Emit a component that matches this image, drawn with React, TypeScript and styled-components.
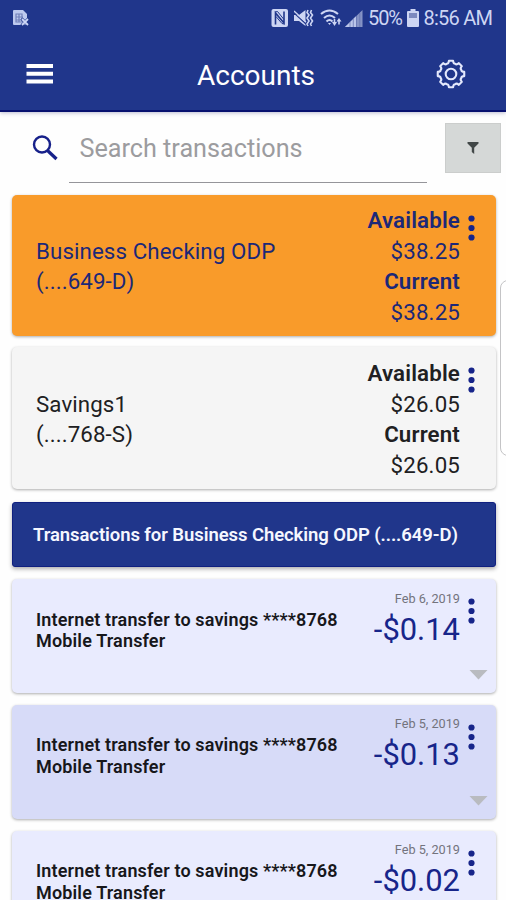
import React from 'react';
import styled, { createGlobalStyle } from 'styled-components';

const navy = '#20368b';
const ink = '#1c2878';

const GlobalStyle = createGlobalStyle`
  * { box-sizing: border-box; }
  html, body { margin: 0; padding: 0; background: #fefefe; }
  body { font-family: Roboto, "Liberation Sans", sans-serif; overflow: hidden; }
  p { margin: 0; }
`;

const Screen = styled.main`
  position: relative;
  width: 506px;
  height: 900px;
  overflow: hidden;
  background: #fefefe;
`;

const Header = styled.header`
  height: 112px;
  background: ${navy};
  border-bottom: 2px solid #07106f;
  box-shadow: 0 1px 4px rgba(60, 60, 130, 0.35);
`;

const StatusBar = styled.div`
  display: flex;
  align-items: center;
  height: 36px;
  padding: 0 12px;
  color: #cdd5f3;
  font-size: 20px;
`;

const StatusIcons = styled.div`
  display: flex;
  align-items: center;
  margin-left: auto;
`;

const StatusText = styled.span<{ $width: number; $spacing: number }>`
  width: ${(p) => p.$width}px;
  letter-spacing: ${(p) => p.$spacing}px;
  white-space: nowrap;
`;

const Glyph = styled.svg<{ $gap?: number }>`
  display: block;
  flex: none;
  margin-right: ${(p) => p.$gap ?? 0}px;
`;

const Toolbar = styled.div`
  display: grid;
  grid-template-columns: 56px 1fr 56px;
  align-items: center;
  height: 76px;
  padding: 0 27px 0 12px;
`;

const ToolButton = styled.button`
  display: flex;
  align-items: center;
  justify-content: center;
  height: 56px;
  padding: 0;
  border: 0;
  background: none;
`;

const Title = styled.h1`
  margin: 3px 0 0 21px;
  color: #fff;
  font-size: 28px;
  font-weight: 400;
  line-height: 32px;
  text-align: center;
`;

const SearchRow = styled.div`
  display: flex;
  height: 83px;
  padding: 11px 5px 0 32px;
`;

const SearchField = styled.div`
  width: 359px;
  height: 60px;
  margin: 0 18px 0 11px;
  padding: 10px 0 0 10.5px;
  border-bottom: 1px solid #95959a;
  color: #9c9c9f;
  font-size: 25.2px;
  line-height: 32px;
`;

const FilterButton = styled.button`
  display: flex;
  align-items: center;
  justify-content: center;
  width: 56px;
  height: 50px;
  padding: 0;
  border: 1px solid #cbcdcc;
  background: #d5d8d7;
`;

const List = styled.div`
  display: flex;
  flex-direction: column;
  padding: 0 10.5px 0 12px;
`;

const Card = styled.section<{ $bg: string; $color: string; $height: number; $gap: number }>`
  display: flex;
  flex: none;
  height: ${(p) => p.$height}px;
  margin-bottom: ${(p) => p.$gap}px;
  padding-left: 24px;
  border-radius: 5px;
  background: ${(p) => p.$bg};
  color: ${(p) => p.$color};
  box-shadow: 0 1px 3px rgba(0, 0, 0, 0.32);
`;

const AccountName = styled.div<{ $top: number }>`
  flex: 1;
  padding-top: ${(p) => p.$top}px;
  font-size: 22.3px;
  line-height: 30.5px;
  letter-spacing: 0.1px;
`;

const Balances = styled.div<{ $top: number }>`
  padding-top: ${(p) => p.$top}px;
  text-align: right;
  font-size: 22.3px;
  line-height: 30.5px;
  letter-spacing: 0.15px;
`;

const BalanceLabel = styled.p`
  font-weight: 600;
`;

const Side = styled.div<{ $top: number }>`
  display: flex;
  flex-direction: column;
  width: 35.5px;
  padding: ${(p) => p.$top}px 0 13px 8px;
`;

const Chevron = styled.svg`
  display: block;
  margin-top: auto;
`;

const Banner = styled.h2`
  display: flex;
  align-items: center;
  height: 65px;
  margin: 0 0 12px;
  padding: 1px 0 0 20px;
  border: 1px solid #102080;
  border-radius: 3px;
  background: ${navy};
  box-shadow: 0 2px 4px rgba(0, 0, 0, 0.32);
  color: #f5f7ff;
  font-size: 18.5px;
  font-weight: 600;
  letter-spacing: -0.08px;
  white-space: nowrap;
`;

const Memo = styled.div`
  flex: 1;
  padding-top: 29.5px;
  font-size: 18px;
  font-weight: 600;
  line-height: 21.5px;
  letter-spacing: 0.15px;
  white-space: nowrap;
`;

const AmountColumn = styled.div`
  padding-top: 11.5px;
  text-align: right;
`;

const DateText = styled.p`
  color: #73737d;
  font-size: 12.7px;
  line-height: 16px;
`;

const Amount = styled.p`
  margin-top: 5px;
  color: #17258a;
  font-size: 30.9px;
  line-height: 36px;
`;

const EdgeHandle = styled.div`
  position: absolute;
  top: 280px;
  right: -12px;
  width: 18px;
  height: 176px;
  border: 1px solid #c4c4c6;
  border-radius: 8px;
  background: #fff;
`;

const Dots = () => (
  <Glyph width="7" height="26" viewBox="0 0 7 26" fill="#17258a">
    <circle cx="3.5" cy="3.5" r="3.1" />
    <circle cx="3.5" cy="13" r="3.1" />
    <circle cx="3.5" cy="22.5" r="3.1" />
  </Glyph>
);

const gearPath = (() => {
  const points: string[] = [];
  const at = (r: number, deg: number) => {
    const a = (deg * Math.PI) / 180;
    return `${(15 + r * Math.cos(a)).toFixed(2)} ${(15 + r * Math.sin(a)).toFixed(2)}`;
  };
  for (let i = 0; i < 8; i++) {
    const c = i * 45 - 90;
    points.push(`${i ? 'L' : 'M'}${at(13.4, c - 9)} L${at(13.4, c + 9)} Q${at(10.4, c + 13)} ${at(11.1, c + 22.5)} Q${at(10.4, c + 32)} ${at(13.4, c + 36)}`);
  }
  return points.join(' ') + 'Z';
})();

const accounts = [
  { name: 'Business Checking ODP', mask: '(....649-D)', amount: '$38.25', bg: '#f99b2a', color: ink, height: 141, gap: 11, top: 10 },
  { name: 'Savings1', mask: '(....768-S)', amount: '$26.05', bg: '#f5f5f5', color: '#202022', height: 142, gap: 13, top: 11 },
];

const transactions = [
  { date: 'Feb 6, 2019', amount: '-$0.14', bg: '#e9ebfe' },
  { date: 'Feb 5, 2019', amount: '-$0.13', bg: '#d7dbf8' },
  { date: 'Feb 5, 2019', amount: '-$0.02', bg: '#e9ebfe' },
];

export default function App() {
  return (
    <>
      <GlobalStyle />
      <Screen>
        <Header>
          <StatusBar>
            <Glyph width="18" height="18" viewBox="0 0 18 18">
              <path d="M2 1h9l4 4v11H2q-1 0-1-1V2q0-1 1-1z" fill="#bdc9ee" />
              <path d="M4 5h6v8H4zM7 5v8M4 8h7M4 11h6" fill="none" stroke="#7180b8" strokeWidth="1.2" />
              <path d="M9.5 9.5l7 7m0-7l-7 7" stroke={navy} strokeWidth="3" />
              <path d="M10 10l6 6m0-6l-6 6" stroke="#cdd7f6" strokeWidth="1.8" />
            </Glyph>
            <StatusIcons>
              <Glyph $gap={5} width="18" height="18" viewBox="0 0 18 18">
                <rect x=".5" width="16.5" height="18" rx="2" fill="#cdd5f3" />
                <path d="M4.5 15.5V4l8.500 10V2.500" fill="none" stroke={navy} strokeWidth="1.6" />
                <path d="M4 3l2.500-.5 6.500 8M13 15l-2-.5-6-7" fill="none" stroke={navy} strokeWidth="1" />
              </Glyph>
              <Glyph $gap={6} width="20" height="18" viewBox="0 0 20 18">
                <path d="M0 6h5l6.500-5v16L5 12H0z" fill="#cdd5f3" />
                <path d="M-.5 3.500L12 15" stroke={navy} strokeWidth="1.2" />
                <path d="M0 2l12 11" stroke="#cdd5f3" strokeWidth="1.3" />
                <path d="M14 1l-1 2.500L15 6l-2 3 2 3-2 3 1 2M17.500 1l-1 2.500 2 2.500-2 3 2 3-2 3 1 2" fill="none" stroke="#cdd5f3" strokeWidth="1.6" />
              </Glyph>
              <Glyph $gap={3} width="22" height="18" viewBox="0 0 22 18">
                <path d="M1 5q8.500-7 17 0M4 9q5.500-5 11 0M6.500 12.500q3-3 6 0" fill="none" stroke="#cdd5f3" strokeWidth="2.1" />
                <path d="M8 14h3l-1.500 2z" fill="#cdd5f3" />
                <path d="M14.500 10v4M19 11.500v4" fill="none" stroke="#cdd5f3" strokeWidth="1.6" />
                <path d="M12 13h5l-2.500 4zM16.500 12.500h5L19 9z" fill="#cdd5f3" />
              </Glyph>
              <Glyph $gap={5} width="18" height="17" viewBox="0 0 18 17">
                <path d="M0 17L17.500 0v17z" fill="#8593c5" />
                <path d="M0 17L11 6.300V17z" fill="#bac5ea" />
                <path d="M5 12v5M8.300 9v8M11.500 6v11M14.800 3v14" stroke="#6170ae" strokeWidth=".7" />
              </Glyph>
              <StatusText $width={38.5} $spacing={-1.1}>50%</StatusText>
              <Glyph $gap={5} width="12" height="18" viewBox="0 0 12 18">
                <path d="M3.500 0h5v2H11q1 0 1 1v14q0 1-1 1H1q-1 0-1-1V3q0-1 1-1h2.500z" fill="#cdd5f3" />
                <path d="M2 4h8v5H2z" fill="#7c89bf" />
              </Glyph>
              <StatusText $width={70.5} $spacing={-0.75}>8:56 AM</StatusText>
            </StatusIcons>
          </StatusBar>
          <Toolbar>
            <ToolButton aria-label="Menu">
              <Glyph width="28" height="20" viewBox="0 0 28 20" fill="#fff">
                <path d="M.5 0h26.500v4H.5zM.5 7.700h26.500v4H.5zM.5 15.400h26.500v4H.5z" />
              </Glyph>
            </ToolButton>
            <Title>Accounts</Title>
            <ToolButton aria-label="Settings">
              <Glyph width="30" height="30" viewBox="0 0 30 30" fill="none" stroke="#e3e8fc" strokeWidth="2.1" strokeLinejoin="round">
                <path d={gearPath} />
                <circle cx="15" cy="15" r="5.3" />
              </Glyph>
            </ToolButton>
          </Toolbar>
        </Header>

        <SearchRow>
          <Glyph width="26" height="50" viewBox="0 0 26 50" fill="none" stroke="#17218a">
            <circle cx="10" cy="21.5" r="8" strokeWidth="2.4" />
            <path d="M15.500 27.500l9 8.500" strokeWidth="3.2" />
          </Glyph>
          <SearchField>Search transactions</SearchField>
          <FilterButton aria-label="Filter">
            <Glyph width="12" height="14" viewBox="0 0 12 14" fill="#424848">
              <path d="M.5 1h11v1.500L7.200 6.800V13L4.800 11V6.800L.5 2.500z" />
            </Glyph>
          </FilterButton>
        </SearchRow>

        <List>
          {accounts.map((a) => (
            <Card key={a.name} $bg={a.bg} $color={a.color} $height={a.height} $gap={a.gap}>
              <AccountName $top={a.top + 30.5}>
                <p>{a.name}</p>
                <p>{a.mask}</p>
              </AccountName>
              <Balances $top={a.top}>
                <BalanceLabel>Available</BalanceLabel>
                <p>{a.amount}</p>
                <BalanceLabel>Current</BalanceLabel>
                <p>{a.amount}</p>
              </Balances>
              <Side $top={20}><Dots /></Side>
            </Card>
          ))}

          <Banner>Transactions for Business Checking ODP (....649-D)</Banner>

          {transactions.map((t) => (
            <Card key={t.amount} $bg={t.bg} $color="#17171b" $height={114} $gap={11.8}>
              <Memo>
                <p>Internet transfer to savings ****8768</p>
                <p>Mobile Transfer</p>
              </Memo>
              <AmountColumn>
                <DateText>{t.date}</DateText>
                <Amount>{t.amount}</Amount>
              </AmountColumn>
              <Side $top={19}>
                <Dots />
                <Chevron width="20" height="10" viewBox="0 0 20 10">
                  <path d="M1.500 0h18l-9 9.500z" fill="#b9bbc0" />
                </Chevron>
              </Side>
            </Card>
          ))}
        </List>
        <EdgeHandle />
      </Screen>
    </>
  );
}
